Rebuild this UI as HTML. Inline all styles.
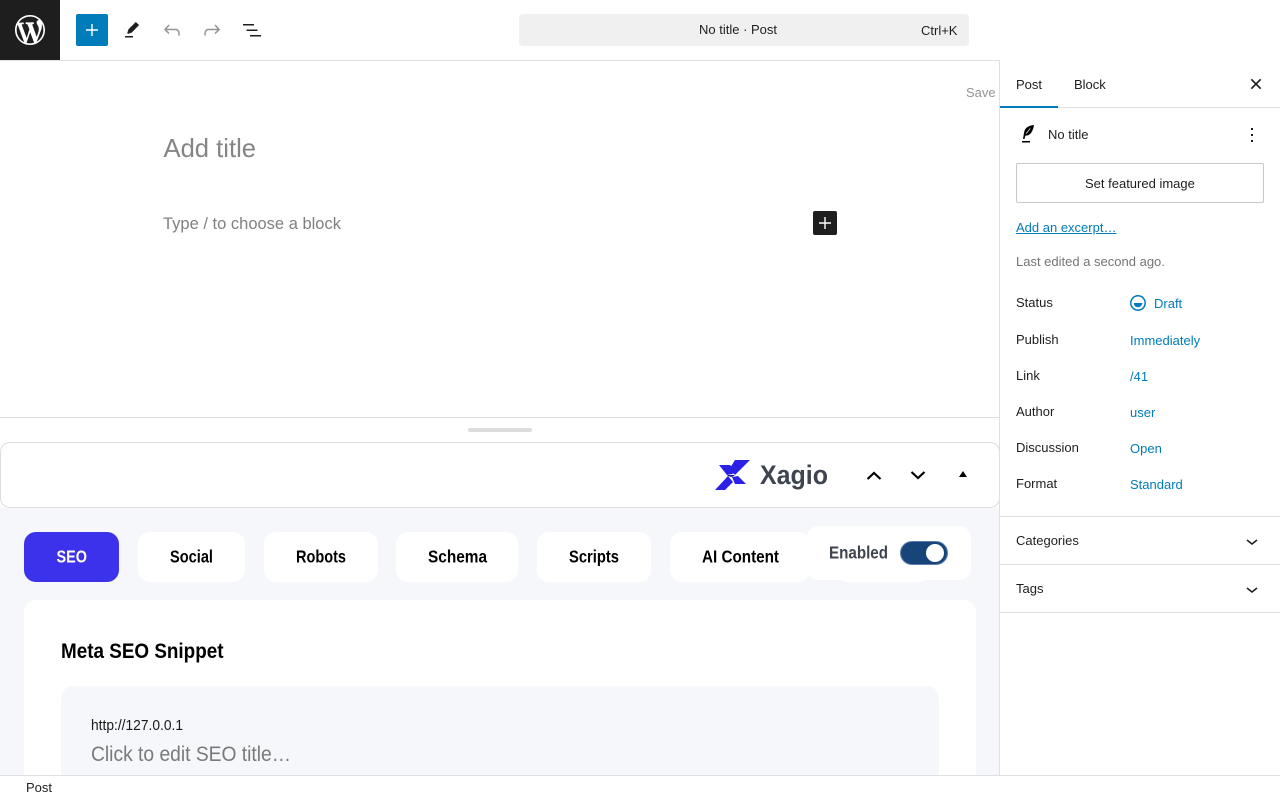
<!DOCTYPE html>
<html lang="en"><head><meta charset="utf-8"><title>Add New Post</title>
<style>
*{box-sizing:border-box}
html,body{margin:0;padding:0;width:1280px;height:800px;overflow:hidden;background:#fff}
body{position:relative;font-family:"Liberation Sans",sans-serif;font-size:13px;color:#1e1e1e}
.b{position:absolute}
.t{position:absolute;white-space:nowrap;line-height:16px;font-size:13px}
.v{color:#007cba}
svg{position:absolute;display:block;overflow:visible}
.pill{position:absolute;top:532px;height:50px;background:#fff;border-radius:12px}
</style></head><body>

<!-- meta box area -->
<div class="b" style="left:0;top:508px;width:999px;height:268px;background:#f5f7fb"></div>
<div class="b" style="left:0;top:417px;width:999px;height:1px;background:#ddd"></div>
<div class="b" style="left:468px;top:428px;width:64px;height:4px;border-radius:2px;background:#ddd"></div>
<div class="b" style="left:0;top:442px;width:1000px;height:66px;background:#fff;border:1px solid #ddd;border-radius:10px"></div>

<div class="pill" style="left:24px;width:95px;background:#3c32eb"></div>
<div class="pill" style="left:138px;width:107px"></div>
<div class="pill" style="left:264px;width:114px"></div>
<div class="pill" style="left:396px;width:122px"></div>
<div class="pill" style="left:537px;width:114px"></div>
<div class="pill" style="left:670px;width:140px"></div>
<div class="pill" style="left:835px;width:95px"></div>
<div class="b" style="left:807px;top:526px;width:164px;height:54px;background:#fff;border-radius:12px"></div>
<div class="b" style="left:24px;top:600px;width:952px;height:190px;background:#fff;border-radius:12px"></div>
<div class="b" style="left:61px;top:686px;width:878px;height:110px;background:#f5f7fb;border-radius:12px"></div>
<div class="b" style="left:900px;top:541px;width:48px;height:24px;border-radius:12px;background:#17457a;border:1px solid #5b7ea8"></div>
<div class="b" style="left:926px;top:544px;width:18px;height:18px;border-radius:50%;background:#fff"></div>

<!-- text in substituted fonts, fitted to the reference widths -->
<svg style="left:0;top:0" width="1280" height="800" viewBox="0 0 1280 800" font-family="Liberation Sans, sans-serif">
<text x="163.5" y="157" font-size="26" fill="#858585" textLength="92.500" lengthAdjust="spacingAndGlyphs">Add title</text>
<text x="163" y="229" font-size="17" fill="#808080" textLength="178" lengthAdjust="spacingAndGlyphs">Type / to choose a block</text>
<g font-weight="700" font-size="17.5" fill="#000">
<text x="56.5" y="562.5" fill="#fff" textLength="30.500" lengthAdjust="spacingAndGlyphs">SEO</text>
<text x="170" y="562.5" textLength="43" lengthAdjust="spacingAndGlyphs">Social</text>
<text x="296" y="562.5" textLength="50" lengthAdjust="spacingAndGlyphs">Robots</text>
<text x="428" y="562.5" textLength="59" lengthAdjust="spacingAndGlyphs">Schema</text>
<text x="569" y="562.5" textLength="50" lengthAdjust="spacingAndGlyphs">Scripts</text>
<text x="702" y="562.5" textLength="77" lengthAdjust="spacingAndGlyphs">AI Content</text>
<text x="829" y="558.5" fill="#3f4550" textLength="59" lengthAdjust="spacingAndGlyphs">Enabled</text>
<text x="61" y="658" font-size="21.5" textLength="162.500" lengthAdjust="spacingAndGlyphs">Meta SEO Snippet</text>
<text x="760" y="484" font-size="27" fill="#3f4550" textLength="68" lengthAdjust="spacingAndGlyphs">Xagio</text>
</g>
<text x="91" y="730" font-size="15" fill="#1a1a1a" textLength="92" lengthAdjust="spacingAndGlyphs">http://127.0.0.1</text>
<text x="91" y="761" font-size="21" fill="#7a7a7a" textLength="200" lengthAdjust="spacingAndGlyphs">Click to edit SEO title…</text>

<!-- Xagio logo -->
<polygon points="719,465 730,465 737,473 727,475" fill="#2a20e6"/>
<polygon points="735,460 750,460 735,475 730,468" fill="#2a20e6"/>
<polygon points="732,477 738,476 746,484 735,484" fill="#2a20e6"/>
<polygon points="715,490 728,476 733,482 725,490" fill="#2a20e6"/>
<polygon points="727,475 735,475 732,477 728,476" fill="#1a148f"/>
<!-- metabox controls -->
<path d="M867.5 479l6.500-6 6.500 6" fill="none" stroke="#000" stroke-width="2.2"/>
<path d="M911.5 472l6.500 6 6.500-6" fill="none" stroke="#000" stroke-width="2.2"/>
<polygon points="959,477 963,471 967,477" fill="#000"/>
</svg>

<!-- editor canvas icons -->
<div class="b" style="left:813px;top:211px;width:24px;height:24px;background:#1e1e1e;border-radius:2px"></div>
<svg style="left:813px;top:211px" width="24" height="24" viewBox="0 0 24 24" fill="#fff"><path d="M11.300 12.700V18h1.400v-5.300H18v-1.400h-5.300V6h-1.400v5.300H6v1.400h5.300z"/></svg>
<div class="t" style="left:966px;top:85px;color:#949494">Save</div>

<!-- top bar -->
<div class="b" style="left:0;top:0;width:1280px;height:61px;background:#fff;border-bottom:1px solid #e0e0e0"></div>
<div class="b" style="left:0;top:0;width:60px;height:60px;background:#1e1e1e"></div>
<svg style="left:12px;top:12px" width="36" height="36" viewBox="-2 -2 24 24" fill="#fff"><path d="M20 10c0-5.51-4.49-10-10-10C4.48 0 0 4.49 0 10c0 5.52 4.48 10 10 10 5.51 0 10-4.48 10-10zM7.78 15.37L4.37 6.22c.55-.02 1.17-.08 1.17-.08.5-.06.44-1.13-.06-1.11 0 0-1.45.11-2.37.11-.18 0-.37 0-.58-.01C4.12 2.69 6.87 1.11 10 1.11c2.33 0 4.45.87 6.05 2.34-.68-.11-1.65.39-1.65 1.58 0 .74.45 1.36.9 2.1.35.61.55 1.36.55 2.46 0 1.49-1.4 5-1.4 5l-3.03-8.37c.54-.02.82-.17.82-.17.5-.05.44-1.25-.06-1.22 0 0-1.44.12-2.38.12-.87 0-2.33-.12-2.33-.12-.5-.03-.56 1.2-.06 1.22l.92.08 1.26 3.41zM17.41 10c.24-.64.74-1.87.43-4.25.7 1.29 1.05 2.71 1.05 4.25 0 3.29-1.73 6.24-4.4 7.78.97-2.59 1.94-5.2 2.92-7.78zM6.1 18.09C3.12 16.65 1.11 13.53 1.11 10c0-1.3.23-2.48.72-3.59C3.25 10.3 4.67 14.2 6.1 18.09zm4.03-6.63l2.58 6.98c-.86.29-1.76.45-2.71.45-.79 0-1.57-.11-2.29-.33.81-2.38 1.62-4.74 2.42-7.1z"/></svg>
<div class="b" style="left:76px;top:14px;width:32px;height:32px;background:#007cba;border-radius:2px"></div>
<svg style="left:80px;top:18px" width="24" height="24" viewBox="0 0 24 24" fill="#fff"><path d="M11.300 12.700V18h1.400v-5.300H18v-1.400h-5.300V6h-1.400v5.300H6v1.400h5.300z"/></svg>
<svg style="left:120px;top:18px" width="24" height="24" viewBox="0 0 24 24" fill="#1e1e1e"><path d="M15.800 4l3.300 3-7.400 7.600-3.700 1.300-.8-.8 1.300-3.800z"/><rect x="5" y="18" width="8" height="1.500"/></svg>
<svg style="left:160px;top:18px" width="24" height="24" viewBox="0 0 24 24" fill="#949494"><path d="M18.3 11.7c-.6-.6-1.4-.9-2.3-.9H6.7l2.9-3.3-1.1-1-4.5 5L8.500 16l1-1-2.700-2.700H16c.5 0 .9.2 1.300.5 1 1 1 3.400 1 4.500v.3h1.500v-.2c0-1.500 0-4.300-1.500-5.700z"/></svg>
<svg style="left:200px;top:18px" width="24" height="24" viewBox="0 0 24 24" fill="#949494"><path d="M15.600 6.500l-1.100 1 2.900 3.300H8c-.9 0-1.700.3-2.300.9-1.400 1.500-1.400 4.200-1.400 5.600v.2h1.500v-.3c0-1.100 0-3.500 1-4.500.3-.3.7-.5 1.300-.5h9.200L14.500 15l1.100 1.100 4.600-4.600-4.600-5z"/></svg>
<svg style="left:240px;top:18px" width="24" height="24" viewBox="0 0 24 24" fill="#1e1e1e"><path d="M3 6h11v1.500H3V6zm3.500 5.500h11V13h-11v-1.500zM21 17H10v1.500h11V17z"/></svg>
<div class="b" style="left:519px;top:14px;width:450px;height:32px;background:#f0f0f0;border-radius:4px"></div>
<div class="t" style="left:699px;top:22px">No title · Post</div>
<div class="t" style="left:921px;top:23px">Ctrl+K</div>

<!-- sidebar -->
<div class="b" style="left:999px;top:60px;width:281px;height:716px;background:#fff;border-left:1px solid #e0e0e0"></div>
<div class="b" style="left:1000px;top:107px;width:280px;height:1px;background:#e0e0e0"></div>
<div class="b" style="left:1000px;top:106px;width:58px;height:2px;background:#007cba"></div>
<div class="t" style="left:1016px;top:77px">Post</div>
<div class="t" style="left:1074px;top:77px">Block</div>
<svg style="left:1244px;top:72px" width="24" height="24" viewBox="0 0 24 24"><path d="M7.300 7.300l9.400 9.400M16.700 7.300l-9.400 9.400" fill="none" stroke="#1e1e1e" stroke-width="1.700"/></svg>
<svg style="left:1016px;top:122px" width="24" height="24" viewBox="0 0 24 24" fill="#000"><path d="M18 3C12 3.500 8.500 6 8 11L7 17H8.500L9.300 13.600C14 14 16.800 10 18 3zM14.500 6.500L10.600 11.800L10 11.400L14 6.100z" fill-rule="evenodd"/><rect x="6" y="19" width="8" height="1.500"/></svg>
<div class="t" style="left:1048px;top:127px">No title</div>
<svg style="left:1240px;top:123px" width="24" height="24" viewBox="0 0 24 24" fill="#1e1e1e"><path d="M13 19h-2v-2h2v2zm0-6h-2v-2h2v2zm0-6h-2V5h2v2z"/></svg>
<div class="b" style="left:1016px;top:163px;width:248px;height:40px;border:1px solid #c8c8c8;border-radius:2px"></div>
<div class="t" style="left:1085px;top:176px">Set featured image</div>
<div class="t v" style="left:1016px;top:220px;text-decoration:underline">Add an excerpt…</div>
<div class="t" style="left:1016px;top:254px;color:#757575">Last edited a second ago.</div>

<div class="t" style="left:1016px;top:295px">Status</div>
<svg style="left:1130px;top:295px" width="16" height="16" viewBox="0 0 16 16"><circle cx="8" cy="8" r="7.200" fill="none" stroke="#007cba" stroke-width="1.500"/><path d="M3.700 8h8.600a4.300 4.300 0 0 1-8.600 0z" fill="#007cba"/></svg>
<div class="t v" style="left:1154px;top:296px">Draft</div>
<div class="t" style="left:1016px;top:332px">Publish</div>
<div class="t v" style="left:1130px;top:333px">Immediately</div>
<div class="t" style="left:1016px;top:368px">Link</div>
<div class="t v" style="left:1130px;top:369px">/41</div>
<div class="t" style="left:1016px;top:404px">Author</div>
<div class="t v" style="left:1130px;top:405px">user</div>
<div class="t" style="left:1016px;top:440px">Discussion</div>
<div class="t v" style="left:1130px;top:441px">Open</div>
<div class="t" style="left:1016px;top:476px">Format</div>
<div class="t v" style="left:1130px;top:477px">Standard</div>

<div class="b" style="left:1000px;top:516px;width:280px;height:1px;background:#e0e0e0"></div>
<div class="t" style="left:1016px;top:533px">Categories</div>
<svg style="left:1240px;top:529px" width="24" height="24" viewBox="0 0 24 24" fill="#1e1e1e"><path d="M17.500 11.600L12 16l-5.500-4.400.9-1.200L12 14l4.500-3.600 1 1.200z"/></svg>
<div class="b" style="left:1000px;top:564px;width:280px;height:1px;background:#e0e0e0"></div>
<div class="t" style="left:1016px;top:581px">Tags</div>
<svg style="left:1240px;top:577px" width="24" height="24" viewBox="0 0 24 24" fill="#1e1e1e"><path d="M17.500 11.600L12 16l-5.500-4.400.9-1.200L12 14l4.500-3.600 1 1.200z"/></svg>
<div class="b" style="left:1000px;top:612px;width:280px;height:1px;background:#e0e0e0"></div>

<!-- footer -->
<div class="b" style="left:0;top:775px;width:1280px;height:25px;background:#fff;border-top:1px solid #e0e0e0"></div>
<div class="t" style="left:26px;top:780px">Post</div>
</body></html>
